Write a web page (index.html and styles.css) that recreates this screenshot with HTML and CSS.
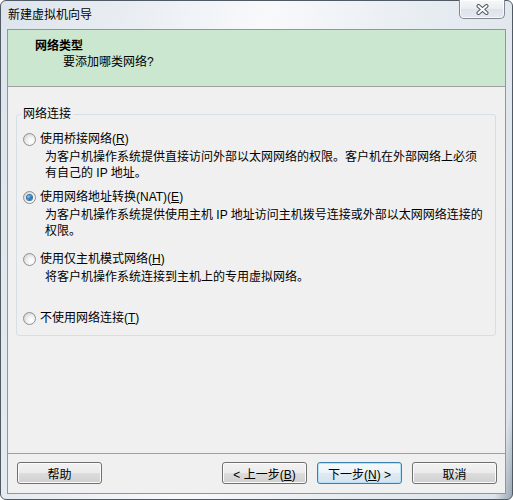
FILE: index.html
```html
<!DOCTYPE html>
<html lang="zh-CN">
<head>
    <meta charset="UTF-8">
    <meta name="viewport" content="width=device-width, initial-scale=1.0">
    <title>新建虚拟机向导</title>
    <link rel="stylesheet" href="styles.css">
</head>
<body>
    <div class="window">
        <div class="titlebar">
            <span class="title">新建虚拟机向导</span>
            <button class="close-btn" type="button" aria-label="关闭">
                <svg width="13" height="11" viewBox="0 0 13 11">
                    <path d="M2.5 2 L10.5 9 M10.5 2 L2.5 9" stroke="#4f5861" stroke-width="4" stroke-linecap="round"/>
                    <path d="M2.5 2 L10.5 9 M10.5 2 L2.5 9" stroke="#ffffff" stroke-width="2" stroke-linecap="round"/>
                </svg>
            </button>
        </div>
        <div class="client">
            <div class="header">
                <h1>网络类型</h1>
                <p>要添加哪类网络?</p>
            </div>
            <div class="content">
                <fieldset class="group">
                    <legend>网络连接</legend>
                    <div class="option gap-s">
                        <label class="choice"><span class="radio"></span>使用桥接网络(<u>R</u>)</label>
                        <p class="desc">为客户机操作系统提供直接访问外部以太网网络的权限。客户机在外部网络上必须<br>有自己的 IP 地址。</p>
                    </div>
                    <div class="option gap-m">
                        <label class="choice"><span class="radio checked"></span>使用网络地址转换(NAT)(<u>E</u>)</label>
                        <p class="desc">为客户机操作系统提供使用主机 IP 地址访问主机拨号连接或外部以太网网络连接的<br>权限。</p>
                    </div>
                    <div class="option gap-l">
                        <label class="choice"><span class="radio"></span>使用仅主机模式网络(<u>H</u>)</label>
                        <p class="desc">将客户机操作系统连接到主机上的专用虚拟网络。</p>
                    </div>
                    <div class="option">
                        <label class="choice"><span class="radio"></span>不使用网络连接(<u>T</u>)</label>
                    </div>
                </fieldset>
            </div>
            <div class="footer">
                <button class="btn" type="button">帮助</button>
                <div class="nav">
                    <button class="btn" type="button">&lt; 上一步(<u>B</u>)</button>
                    <button class="btn default" type="button">下一步(<u>N</u>) &gt;</button>
                    <button class="btn" type="button">取消</button>
                </div>
            </div>
        </div>
    </div>
</body>
</html>
```

FILE: styles.css
```css
* {
    box-sizing: border-box;
}

body {
    margin: 0;
    background-color: #ffffff;
    font-family: "Liberation Sans", "Noto Sans CJK SC", sans-serif;
    font-size: 12px;
    line-height: 16px;
    color: #000;
}

.window {
    width: 513px;
    height: 500px;
    border: 1px solid #505a65;
    border-radius: 6px;
    padding: 0 6px 5px;
    display: flex;
    flex-direction: column;
    background: linear-gradient(100deg, #dde4eb 0%, #ebeff4 25%, #f8f9fb 45%, #e8edf2 70%, #dce3ea 97%, #9aa6b2 100%);
}

.titlebar {
    height: 28px;
    display: flex;
    justify-content: space-between;
    align-items: flex-start;
}

.title {
    margin: 6px 0 0 1px;
}

.close-btn {
    width: 46px;
    height: 19px;
    margin: -1px 1px 0 0;
    padding: 0;
    border: 1px solid #7f8994;
    border-top: none;
    border-radius: 0 0 5px 5px;
    background: linear-gradient(#f6f7f9, #e9edf1 50%, #dde3e9 51%, #e4e9ee);
    box-shadow: inset 0 0 0 1px rgba(255, 255, 255, 0.7);
    display: flex;
    align-items: center;
    justify-content: center;
}

.client {
    flex: 1;
    border: 1px solid #8c97a2;
    background-color: #f0f0f0;
    display: flex;
    flex-direction: column;
}

.header {
    background-color: #cce7cf;
    border-bottom: 1px solid #a0a0a0;
    padding: 8px 0 16px 27px;
}

.header h1 {
    margin: 0;
    font-size: 12px;
    font-weight: bold;
}

.header p {
    margin: 0 0 0 28px;
}

.content {
    flex: 1;
    padding: 19px 9px 0 8px;
}

.group {
    margin: 0;
    min-width: 0;
    border: 1px solid #d5dfe5;
    border-radius: 3px;
    padding: 9px 0 9px 6px;
}

.group legend {
    padding: 0 2px;
    margin-left: -2px;
}

.option {
    margin-bottom: 8px;
}

.option.gap-m {
    margin-bottom: 12px;
}

.option.gap-l {
    margin-bottom: 25px;
}

.option:last-child {
    margin-bottom: 0;
}

.choice {
    display: flex;
    align-items: center;
    height: 16px;
}

.radio {
    width: 13px;
    height: 13px;
    margin-right: 4px;
    border-radius: 50%;
    border: 1px solid #8e8f8f;
    background: radial-gradient(circle at 65% 65%, #ffffff 0%, #f4f4f4 35%, #d6d6d6 80%, #c4c4c4 100%);
    position: relative;
}

.radio.checked::after {
    content: "";
    position: absolute;
    left: 3px;
    top: 3px;
    width: 5px;
    height: 5px;
    border-radius: 50%;
    background: radial-gradient(circle at 35% 35%, #8fd0f5 0%, #2a7fc4 45%, #0d4a85 100%);
    box-shadow: 0 0 0 1px #3d6f9c;
}

.desc {
    margin: 2px 0 0 22px;
    white-space: nowrap;
}

.footer {
    border-top: 1px solid #a0a0a0;
    padding: 8px 8px 9px 9px;
    display: flex;
    justify-content: space-between;
}

.nav {
    display: flex;
    gap: 10px;
}

.btn {
    width: 85px;
    height: 22px;
    padding: 0;
    font-family: inherit;
    font-size: 12px;
    color: #000;
    border: 1px solid #707070;
    border-radius: 3px;
    background: linear-gradient(#f2f2f2, #ebebeb 50%, #dddddd 50%, #cfcfcf);
    box-shadow: inset 0 0 0 1px #fbfbfb;
}

.btn.default {
    border-color: #3c7fb1;
    background: linear-gradient(#f5f9fc, #ecf3f8 50%, #e0eaf2 50%, #d6e3ee);
    box-shadow: inset 0 0 0 1px #b6e0f8;
}
```
